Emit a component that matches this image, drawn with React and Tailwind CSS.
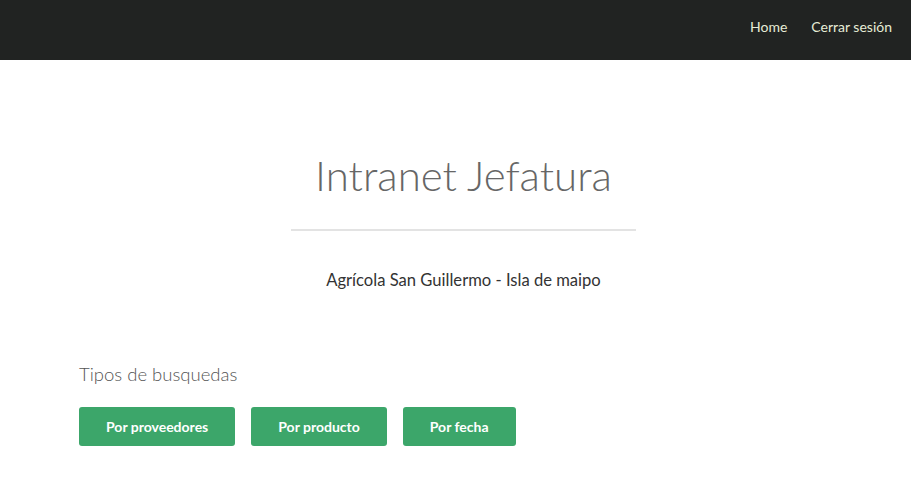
import React from 'react';

const NavBar = () => (
  <nav className="h-[60px] bg-[#212322] flex items-center justify-end pr-[19px] pb-[7px]">
    <a href="#" className="text-[14px] text-[#e6ecd6] mr-[24px]">Home</a>
    <a href="#" className="text-[14px] text-[#e6ecd6]">Cerrar sesión</a>
  </nav>
);

const App = () => {
  const buttons = ['Por proveedores', 'Por producto', 'Por fecha'];

  return (
    <div className="min-h-screen bg-white font-['Lato','Liberation_Sans',sans-serif]">
      <NavBar />

      {/* Header */}
      <div className="pl-[16px] pt-[92px] flex flex-col items-center">
        <h1 className="text-[42px] leading-[1.1] font-light text-[#666]">Intranet Jefatura</h1>
        <hr className="w-[345px] border-t-2 border-[#e3e3e3] mt-[31px]" />
        <p className="text-[16.6px] text-[#333] mt-[37px]">Agrícola San Guillermo - Isla de maipo</p>
      </div>

      {/* Busquedas */}
      <div className="px-[79px] mt-[68px]">
        <h3 className="text-[18.5px] font-light text-[#555]">Tipos de busquedas</h3>
        <div className="flex gap-[16px] mt-[18px]">
          {buttons.map((b) => (
            <button
              key={b}
              className="h-[39px] px-[27px] bg-[#3ca66a] text-white text-[14px] font-bold rounded-[3px]"
            >
              {b}
            </button>
          ))}
        </div>
      </div>
    </div>
  );
};

export default App;
